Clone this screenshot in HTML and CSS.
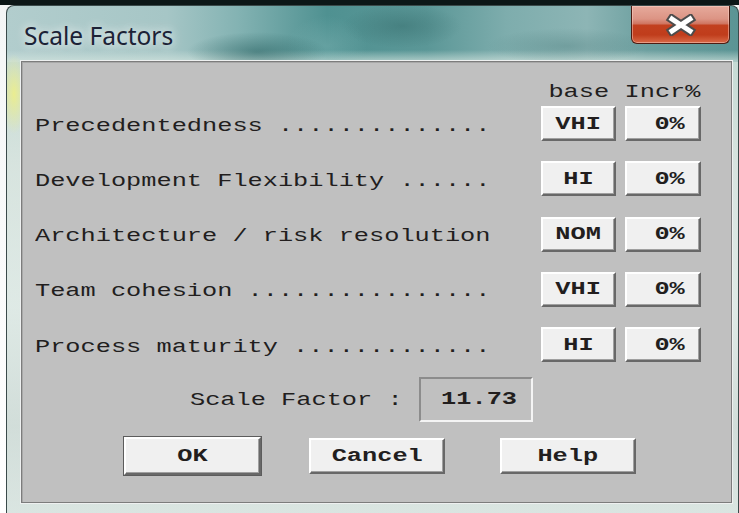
FILE: index.html
```html
<!DOCTYPE html>
<html lang="en">
<head>
<meta charset="utf-8">
<title>Scale Factors</title>
<link rel="stylesheet" href="styles.css">
</head>
<body>
<div class="window">
  <div class="titlebar">
    <span class="title">Scale Factors</span>
    <button class="close" type="button" aria-label="Close">
      <svg width="32" height="22" viewBox="0 0 32 22">
        <path d="M7 5 L25 17 M25 5 L7 17" stroke="#4c4c4c" stroke-width="9" stroke-linecap="square"/>
        <path d="M7 5 L25 17 M25 5 L7 17" stroke="#ffffff" stroke-width="5" stroke-linecap="square"/>
      </svg>
    </button>
  </div>
  <div class="client">
    <div class="grid head">
      <span></span>
      <span class="col-title"><span class="cap">base</span></span>
      <span class="col-title"><span class="cap">Incr%</span></span>
    </div>
    <div class="rows">
      <div class="grid row">
        <span class="label">Precedentedness ..............</span>
        <button class="btn" type="button"><span class="cap">VHI</span></button>
        <button class="btn pct" type="button"><span class="cap">0%</span></button>
      </div>
      <div class="grid row">
        <span class="label">Development Flexibility ......</span>
        <button class="btn" type="button"><span class="cap">HI</span></button>
        <button class="btn pct" type="button"><span class="cap">0%</span></button>
      </div>
      <div class="grid row">
        <span class="label">Architecture / risk resolution</span>
        <button class="btn" type="button"><span class="cap">NOM</span></button>
        <button class="btn pct" type="button"><span class="cap">0%</span></button>
      </div>
      <div class="grid row">
        <span class="label">Team cohesion ................</span>
        <button class="btn" type="button"><span class="cap">VHI</span></button>
        <button class="btn pct" type="button"><span class="cap">0%</span></button>
      </div>
      <div class="grid row">
        <span class="label">Process maturity .............</span>
        <button class="btn" type="button"><span class="cap">HI</span></button>
        <button class="btn pct" type="button"><span class="cap">0%</span></button>
      </div>
    </div>
    <div class="total">
      <span class="total-label"><span class="label">Scale Factor :</span></span>
      <span class="readout"><span class="cap">11.73</span></span>
    </div>
    <div class="actions">
      <button class="btn wide default" type="button"><span class="cap">OK</span></button>
      <button class="btn wide" type="button"><span class="cap">Cancel</span></button>
      <button class="btn wide help" type="button"><span class="cap">Help</span></button>
    </div>
  </div>
</div>
</body>
</html>
```

FILE: styles.css
```css
html, body {
  margin: 0;
  padding: 0;
}

body {
  width: 739px;
  height: 513px;
  overflow: hidden;
  background: linear-gradient(to bottom, #0c1717 0, #0c1717 5px, #f4f6f6 5px, #ffffff 100%);
}

/* Aero-style glass window frame */
.window {
  margin: 5px 0 0 6px;
  width: 733px;
  height: 520px;
  box-sizing: border-box;
  border: 1px solid #3a4a4a;
  border-bottom: none;
  border-radius: 8px 8px 0 0;
  padding: 0 0 0 14px;
  display: flex;
  flex-direction: column;
  background:
    radial-gradient(ellipse 14px 40px at 7px 88px, rgba(236, 238, 140, 0.95), rgba(236, 238, 140, 0) 100%),
    radial-gradient(ellipse 70px 20px at 250px 46px, rgba(40, 96, 96, 0.55), rgba(40, 96, 96, 0)),
    radial-gradient(ellipse 60px 22px at 395px 20px, rgba(50, 104, 104, 0.45), rgba(50, 104, 104, 0)),
    radial-gradient(ellipse 80px 18px at 560px 40px, rgba(70, 120, 120, 0.35), rgba(70, 120, 120, 0)),
    radial-gradient(ellipse 40px 30px at 320px 40px, rgba(140, 190, 190, 0.35), rgba(140, 190, 190, 0)),
    linear-gradient(to bottom, rgba(230, 240, 236, 0) 44px, rgba(214, 230, 224, 0.65) 55px),
    linear-gradient(90deg, #b2cdcd 0, #a6c6c6 160px, #84b3b3 230px, #4f9191 320px, #5b9797 420px, #7eadad 500px, #8db5b5 580px, #6c9f9f 640px, #5a9494 733px) 0 0 / 100% 56px no-repeat,
    linear-gradient(to bottom, #a5c4bf 56px, #d9dfdc 160px, #eef0f0 300px, #c9cdcd 420px, #e4e6e6 100%);
}

.titlebar {
  height: 55px;
  flex: none;
  display: flex;
  align-items: flex-start;
  justify-content: space-between;
  padding-right: 8px;
}

.title {
  margin: 14px 0 0 3px;
  font-family: "Noto Sans", "Open Sans", sans-serif;
  font-size: 24.5px;
  line-height: 32px;
  color: #1c2236;
  text-shadow: 0 0 8px rgba(255, 255, 255, 0.75), 0 0 14px rgba(255, 255, 255, 0.55);
}

.close {
  width: 99px;
  height: 38px;
  margin: 0;
  padding: 0;
  box-sizing: border-box;
  border: 1px solid #4d1c12;
  border-top: none;
  border-radius: 0 0 6px 6px;
  box-shadow: inset 0 0 0 1px rgba(255, 220, 210, 0.45);
  background: linear-gradient(to bottom, #e6aa9c 0, #dc9484 35%, #cf7460 48%, #c2401f 52%, #c03d1c 78%, #d96a48 100%);
  display: flex;
  align-items: center;
  justify-content: center;
}

.close svg {
  display: block;
}

/* Classic gray client area */
.client {
  width: 711px;
  height: 442px;
  box-sizing: border-box;
  flex: none;
  background: #c0c0c0;
  border: 1px solid #7c7c7c;
  box-shadow: 0 0 0 1px #eef0f0, inset 1px 1px 0 #a8a8a8;
  padding: 20px 30px 0 13px;
  font-family: "Liberation Mono", "Courier New", monospace;
  font-size: 19px;
  color: #221e1e;
}

/* The dialog's fixed-pitch face is wide: glyphs are stretched to a 15px cell */
.label,
.cap {
  display: inline-block;
  white-space: pre;
  transform: scaleX(1.3316);
}

.label {
  transform-origin: left center;
  line-height: 30px;
}

.cap {
  transform-origin: center;
}

.grid {
  display: grid;
  grid-template-columns: 1fr 75px 76px;
  column-gap: 9px;
  align-items: center;
}

.head {
  height: 20px;
  line-height: 20px;
  margin-bottom: 4px;
}

.col-title {
  text-align: center;
}

.rows {
  display: flex;
  flex-direction: column;
  gap: 20.25px;
}

.row {
  height: 35px;
}

.row .label {
  padding-top: 4px;
}

.btn {
  font: inherit;
  font-weight: bold;
  color: #221e1e;
  height: 35px;
  margin: 0;
  padding: 0;
  box-sizing: border-box;
  background: #f0f0f0;
  border: 2px solid;
  border-color: #ffffff #686868 #686868 #ffffff;
  box-shadow: inset -1px -1px 0 #a0a0a0;
  line-height: 30px;
  text-align: center;
}

.pct {
  text-align: right;
  padding-right: 14px;
}

.pct .cap,
.readout .cap {
  transform-origin: right center;
}

.total {
  display: flex;
  align-items: center;
  margin: 15px 0 0 155px;
  height: 45px;
}

.total-label {
  width: 229px;
}

.readout {
  width: 114px;
  height: 45px;
  box-sizing: border-box;
  border: 2px solid;
  border-color: #8c8c8c #f4f4f4 #f4f4f4 #8c8c8c;
  font-weight: bold;
  line-height: 41px;
  text-align: right;
  padding-right: 14px;
}

.actions {
  display: flex;
  align-items: center;
  gap: 48px;
  margin: 15px 0 0 88px;
}

.wide {
  width: 136px;
  height: 36px;
}

.default {
  width: 137px;
  height: 38px;
  outline: none;
  box-shadow: 0 0 0 1px #5c5c5c, inset -1px -1px 0 #a0a0a0;
  margin-left: 1px;
}

.help {
  margin-left: 7px;
}
```
